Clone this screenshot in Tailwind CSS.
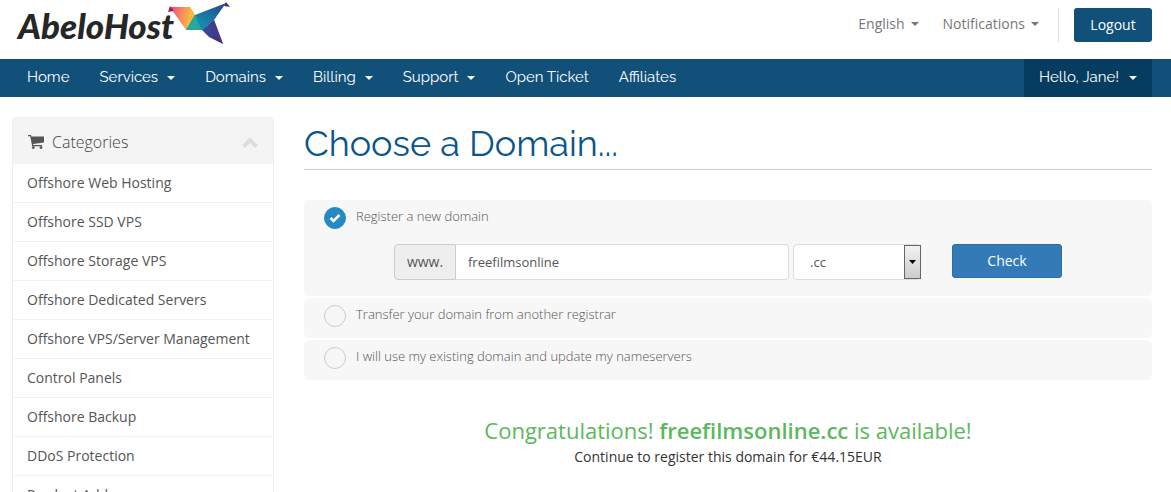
<!DOCTYPE html>
<html lang="en">
<head>
    <meta charset="UTF-8">
    <meta name="viewport" content="width=device-width, initial-scale=1.0">
    <title>AbeloHost - Choose a Domain</title>

    <!-- Tailwind CSS for styling -->
    <script src="https://cdn.jsdelivr.net/npm/@tailwindcss/browser@4"></script>
</head>
<body class="bg-white text-[#333] font-['Open_Sans',sans-serif] text-sm">

    <!-- Header -->
    <header class="flex h-[59px] items-start justify-between pl-[18px] pr-[19px]">
        <a href="#" class="flex items-start text-[#262626]">
            <span class="pt-[5px] font-['Lato',sans-serif] text-[35px] leading-10 font-black italic">AbeloHost</span>
            <svg class="-ml-[10px] h-12 w-[70px]" viewBox="0 0 70 48" aria-hidden="true">
                <defs>
                    <linearGradient id="wing" x1="0" y1="0" x2="1" y2="0.2">
                        <stop offset="0" stop-color="#e8467c"/>
                        <stop offset="0.5" stop-color="#f68a5c"/>
                        <stop offset="1" stop-color="#fdc43f"/>
                    </linearGradient>
                    <linearGradient id="body" x1="0" y1="1" x2="1" y2="0">
                        <stop offset="0" stop-color="#1fa79c"/>
                        <stop offset="0.5" stop-color="#1579a8"/>
                        <stop offset="1" stop-color="#33408c"/>
                    </linearGradient>
                    <linearGradient id="tail" x1="0" y1="0" x2="1" y2="1">
                        <stop offset="0" stop-color="#2a5da8"/>
                        <stop offset="1" stop-color="#4b2470"/>
                    </linearGradient>
                </defs>
                <path d="M6 7 26 7 31 15 22 30Z" fill="url(#wing)"/>
                <path d="M6 6 4 12 10 11Z" fill="#a01f5c"/>
                <path d="M26 7 31 15 22 30Z" fill="#fbb83f"/>
                <path d="M31 15 26 23 22 30 30 25Z" fill="#8fbf4b"/>
                <path d="M31 15 62 3 50 20 38 30 22 30Z" fill="url(#body)"/>
                <path d="M31 15 22 30 38 30Z" fill="#2ba89c"/>
                <path d="M31 15 44 25 38 30Z" fill="#1b86b5"/>
                <path d="M38 30 50 20 59 44 45 37Z" fill="url(#tail)"/>
                <path d="M44 25 50 20 59 44Z" fill="#463a8c"/>
                <path d="M62 2 66 7 60 6Z" fill="#4a2a7c"/>
            </svg>
        </a>
        <div class="flex items-start pt-2 leading-8 text-[#777]">
            <a href="#" class="flex items-center gap-[6px]">English
                <svg class="h-1 w-2" viewBox="0 0 8 4" fill="currentColor"><path d="M0 0h8L4 4z"/></svg>
            </a>
            <a href="#" class="ml-6 flex items-center gap-[6px]">Notifications
                <svg class="h-1 w-2" viewBox="0 0 8 4" fill="currentColor"><path d="M0 0h8L4 4z"/></svg>
            </a>
            <div class="ml-[19px] h-[34px] border-l border-[#ddd] pl-[15px]">
                <button type="button" class="block h-[34px] w-[78px] rounded-[3px] bg-[#115079] text-white">Logout</button>
            </div>
        </div>
    </header>

    <!-- Main navigation -->
    <nav class="flex h-[38px] items-stretch justify-between bg-[#115079] pl-3 pr-[19px] font-['Raleway','Lato',sans-serif] text-[15px] text-white">
        <div class="flex items-stretch">
            <a href="#" class="flex items-center px-[15px]">Home</a>
            <a href="#" class="flex items-center gap-[9px] px-[15px]">Services
                <svg class="h-1 w-2" viewBox="0 0 8 4" fill="currentColor"><path d="M0 0h8L4 4z"/></svg>
            </a>
            <a href="#" class="flex items-center gap-[9px] px-[15px]">Domains
                <svg class="h-1 w-2" viewBox="0 0 8 4" fill="currentColor"><path d="M0 0h8L4 4z"/></svg>
            </a>
            <a href="#" class="flex items-center gap-[9px] px-[15px]">Billing
                <svg class="h-1 w-2" viewBox="0 0 8 4" fill="currentColor"><path d="M0 0h8L4 4z"/></svg>
            </a>
            <a href="#" class="flex items-center gap-[9px] px-[15px]">Support
                <svg class="h-1 w-2" viewBox="0 0 8 4" fill="currentColor"><path d="M0 0h8L4 4z"/></svg>
            </a>
            <a href="#" class="flex items-center px-[15px]">Open Ticket</a>
            <a href="#" class="flex items-center px-[15px]">Affiliates</a>
        </div>
        <a href="#" class="flex items-center gap-[10px] bg-[#053c5f] px-[15px]">Hello, Jane!
            <svg class="h-1 w-2" viewBox="0 0 8 4" fill="currentColor"><path d="M0 0h8L4 4z"/></svg>
        </a>
    </nav>

    <div class="flex items-start gap-[30px] pt-5 pr-[19px] pl-3">

        <!-- Categories sidebar -->
        <aside class="w-[262px] shrink-0 overflow-hidden rounded border border-[#eee] text-[#555]">
            <h2 class="flex h-[46px] items-center bg-[#f4f4f4] px-[15px] pt-[2px] text-base font-light text-[#444]">
                <svg class="mr-2 h-[14px] w-4" viewBox="0 0 16 14" fill="#555" aria-hidden="true">
                    <path d="M0 0h3l.4 1.500H16v6L5 9l.3 1H14v1.200H4.200L2.200 1.300H0z"/>
                    <circle cx="5.300" cy="12.600" r="1.400"/>
                    <circle cx="13" cy="12.600" r="1.400"/>
                </svg>
                Categories
                <svg class="ml-auto h-[11px] w-4" viewBox="0 0 16 11" fill="none" stroke="#ddd" stroke-width="4" aria-hidden="true"><path d="M1.500 9.500 8 3l6.500 6.500"/></svg>
            </h2>
            <ul class="leading-[38px]">
                <li class="border-b border-[#f2f2f2] px-[14px]"><a href="#">Offshore Web Hosting</a></li>
                <li class="border-b border-[#f2f2f2] px-[14px]"><a href="#">Offshore SSD VPS</a></li>
                <li class="border-b border-[#f2f2f2] px-[14px]"><a href="#">Offshore Storage VPS</a></li>
                <li class="border-b border-[#f2f2f2] px-[14px]"><a href="#">Offshore Dedicated Servers</a></li>
                <li class="border-b border-[#f2f2f2] px-[14px]"><a href="#">Offshore VPS/Server Management</a></li>
                <li class="border-b border-[#f2f2f2] px-[14px]"><a href="#">Control Panels</a></li>
                <li class="border-b border-[#f2f2f2] px-[14px]"><a href="#">Offshore Backup</a></li>
                <li class="border-b border-[#f2f2f2] px-[14px]"><a href="#">DDoS Protection</a></li>
                <li class="px-[14px]"><a href="#">Product Addons</a></li>
            </ul>
        </aside>

        <!-- Domain chooser -->
        <main class="min-w-0 flex-1">
            <h1 class="border-b border-[#ccc] pt-[2px] pb-[2px] font-['Raleway','Lato',sans-serif] text-4xl leading-12 text-[#0a558c]">Choose a Domain...</h1>

            <form class="mt-[30px] space-y-[2px] text-[#555]">
                <div class="h-24 rounded-md bg-[#f7f7f7] px-5 pt-[7px]">
                    <label class="flex items-start gap-[10px] text-[13px] leading-[18px] font-light">
                        <span class="relative size-[22px]">
                            <input type="radio" name="domainoption" checked class="block size-[22px] appearance-none rounded-full border border-[#ccc] checked:border-[#2489c5] checked:bg-[#2489c5]">
                            <svg class="pointer-events-none absolute inset-0" viewBox="0 0 22 22" fill="none" stroke="#fff" stroke-width="2.500"><path d="m6.500 11 3 3 6-6"/></svg>
                        </span>
                        Register a new domain
                    </label>
                    <div class="mt-[15px] flex px-[70px]">
                        <label for="sld" class="flex h-9 w-[62px] items-center justify-center rounded-l border border-[#ccc] bg-[#eee]">www.</label>
                        <input type="text" id="sld" value="freefilmsonline" class="h-9 min-w-0 flex-1 rounded-r border border-l-0 border-[#ddd] bg-white px-3 text-[13px]">
                        <div class="relative ml-1 w-32">
                            <select aria-label="Domain extension" class="h-9 w-full appearance-none rounded border border-[#ddd] bg-white px-4 text-[13px]">
                                <option>.cc</option>
                                <option>.com</option>
                                <option>.net</option>
                            </select>
                            <span class="pointer-events-none absolute top-px right-0 flex h-[34px] w-[17px] items-center justify-center border border-[#666] bg-linear-to-b from-[#f2f2f2] to-[#ccc]">
                                <svg class="h-1 w-[7px]" viewBox="0 0 7 4"><path d="M0 0h7L3.500 4z"/></svg>
                            </span>
                        </div>
                        <button type="button" class="ml-[31px] h-[34px] w-[110px] rounded-[3px] border border-[#2e6da4] bg-[#337ab7] text-white">Check</button>
                    </div>
                </div>
                <div class="h-10 rounded-md bg-[#f7f7f7] px-5 pt-[7px]">
                    <label class="flex items-start gap-[10px] text-[13px] leading-[18px] font-light">
                        <input type="radio" name="domainoption" class="block size-[22px] appearance-none rounded-full border border-[#ccc]">
                        Transfer your domain from another registrar
                    </label>
                </div>
                <div class="h-10 rounded-md bg-[#f7f7f7] px-5 pt-[7px]">
                    <label class="flex items-start gap-[10px] text-[13px] leading-[18px] font-light">
                        <input type="radio" name="domainoption" class="block size-[22px] appearance-none rounded-full border border-[#ccc]">
                        I will use my existing domain and update my nameservers
                    </label>
                </div>
            </form>

            <!-- Availability result -->
            <div class="mt-[34px] text-center">
                <p class="text-[22px] leading-8 text-[#5cb85c]">Congratulations! <strong class="font-semibold">freefilmsonline.cc</strong> is available!</p>
                <p class="leading-[22px]">Continue to register this domain for €44.15EUR</p>
            </div>
        </main>
    </div>

</body>
</html>
